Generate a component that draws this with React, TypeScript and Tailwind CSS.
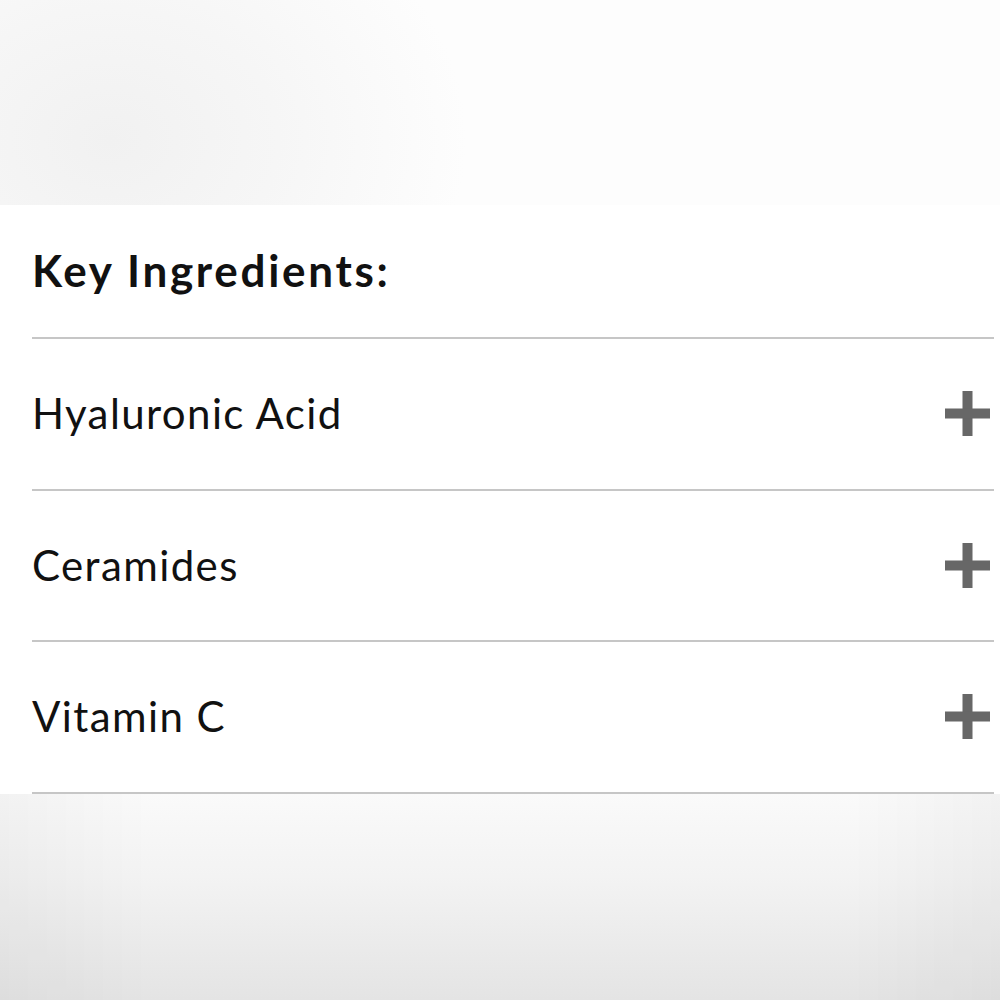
const items = ["Hyaluronic Acid", "Ceramides", "Vitamin C"]

function PlusIcon() {
  return (
    <svg width="45" height="45" viewBox="0 0 45 45" className="shrink-0">
      <rect x="17.5" y="0" width="10" height="45" fill="#676767" />
      <rect x="0" y="17.5" width="45" height="10" fill="#676767" />
    </svg>
  )
}

export default function App() {
  return (
    <div className="w-[1000px] h-[1000px] flex flex-col bg-white font-['Lato',sans-serif] text-[#111]">
      {/* top fade */}
      <div className="h-[205px] bg-[radial-gradient(ellipse_420px_330px_at_110px_140px,#f1f1f1,#f6f6f6_40%,#fdfdfd_85%)]" />

      <div className="pl-[32px] pr-[6px]">
        <div className="h-[132px] flex items-center pb-[2px]">
          <h2 className="text-[44px] font-bold tracking-[2.7px]">Key Ingredients:</h2>
        </div>
        {items.map((item) => (
          <div
            key={item}
            className="h-[151.5px] border-t-2 border-[#c6c6c6] flex items-center justify-between pr-[4px]"
          >
            <span className="text-[42px] tracking-[1.4px]">{item}</span>
            <PlusIcon />
          </div>
        ))}
        <div className="border-t-2 border-[#c6c6c6]" />
      </div>

      {/* bottom fade */}
      <div className="flex-1 bg-[linear-gradient(to_right,rgba(0,0,0,0.03),transparent_15%,transparent_85%,rgba(0,0,0,0.03)),linear-gradient(to_bottom,#fafafa,#f3f3f3_40%,#e4e4e4)]" />
    </div>
  )
}
